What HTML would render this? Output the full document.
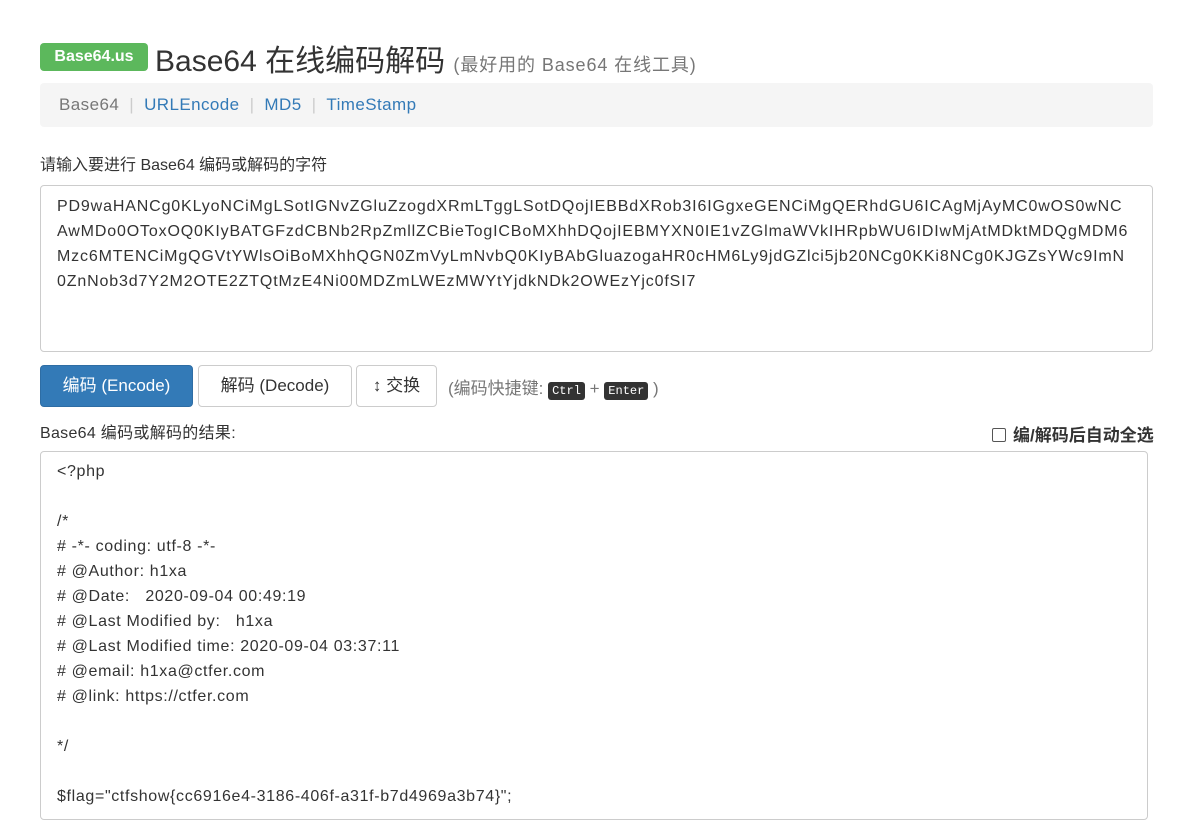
<!DOCTYPE html>
<html><head><meta charset="utf-8"><style>
body{margin:0;background:#fff;font-family:"Liberation Sans","Noto Sans CJK SC",sans-serif;color:#333;width:1185px;height:824px;overflow:hidden;position:relative}
.abs{position:absolute}
.badge{left:40px;top:43px;width:108px;height:28px;background:#5cb85c;color:#fff;font-weight:bold;font-size:16px;border-radius:4px;text-align:center;line-height:28px}
.h1{left:155px;top:36px;font-size:30px;color:#333;white-space:nowrap}
.h1 small{font-size:18px;color:#777;letter-spacing:0.05em}
.nav{left:40px;top:83px;width:1113px;height:44px;background:#f5f5f5;border-radius:4px;font-size:17px;line-height:44px;letter-spacing:0.025em}
.nav span{color:#ccc;margin:0 10px}
.nav a{color:#337ab7;text-decoration:none}
.ta{border:1px solid #ccc;border-radius:4px;box-sizing:border-box;font-size:16px;line-height:25px;padding:8px 16px;color:#333;word-break:break-all;letter-spacing:0.85px}
.btn{top:365px;height:42px;box-sizing:border-box;border:1px solid #ccc;border-radius:4px;font-size:17px;line-height:40px;text-align:center;background:#fff}
kbd{background:#333;color:#fff;font-family:"Liberation Mono",monospace;font-size:12px;padding:2px 4px;border-radius:3px}
</style></head><body>
<div class="abs badge">Base64.us</div>
<div class="abs h1">Base64 在线编码解码 <small>(最好用的 Base64 在线工具)</small></div>
<div class="abs nav"><span style="color:#777;margin:0 0 0 19px">Base64</span><span>|</span><a>URLEncode</a><span>|</span><a>MD5</a><span>|</span><a>TimeStamp</a></div>
<div class="abs" style="left:40px;top:151px;font-size:16px">请输入要进行 Base64 编码或解码的字符</div>
<div class="abs ta" style="left:40px;top:185px;width:1113px;height:167px;white-space:pre-line">PD9waHANCg0KLyoNCiMgLSotIGNvZGluZzogdXRmLTggLSotDQojIEBBdXRob3I6IGgxeGENCiMgQERhdGU6ICAgMjAyMC0wOS0wNC
AwMDo0OToxOQ0KIyBATGFzdCBNb2RpZmllZCBieTogICBoMXhhDQojIEBMYXN0IE1vZGlmaWVkIHRpbWU6IDIwMjAtMDktMDQgMDM6
Mzc6MTENCiMgQGVtYWlsOiBoMXhhQGN0ZmVyLmNvbQ0KIyBAbGluazogaHR0cHM6Ly9jdGZlci5jb20NCg0KKi8NCg0KJGZsYWc9ImN
0ZnNob3d7Y2M2OTE2ZTQtMzE4Ni00MDZmLWEzMWYtYjdkNDk2OWEzYjc0fSI7</div>
<div class="abs btn" style="left:40px;width:153px;background:#337ab7;border-color:#2e6da4;color:#fff">编码 (Encode)</div>
<div class="abs btn" style="left:198px;width:154px">解码 (Decode)</div>
<div class="abs btn" style="left:356px;width:81px">↕ 交换</div>
<div class="abs" style="left:448px;top:374px;font-size:17px;color:#777">(编码快捷键: <kbd>Ctrl</kbd> + <kbd>Enter</kbd> )</div>
<div class="abs" style="left:40px;top:419px;font-size:16px;letter-spacing:0.3px">Base64 编码或解码的结果:</div>
<div class="abs" style="left:992px;top:421px;font-size:17px;font-weight:bold"><span style="display:inline-block;width:12px;height:12px;border:1px solid #555;border-radius:2px;vertical-align:-1px;margin-right:7px"></span>编/解码后自动全选</div>
<div class="abs ta" style="left:40px;top:451px;width:1108px;height:369px;white-space:pre;padding-top:7px;letter-spacing:0.65px">&lt;?php

/*
# -*- coding: utf-8 -*-
# @Author: h1xa
# @Date:   2020-09-04 00:49:19
# @Last Modified by:   h1xa
# @Last Modified time: 2020-09-04 03:37:11
# @email: h1xa@ctfer.com
# @link: https://ctfer.com

*/

$flag="ctfshow{cc6916e4-3186-406f-a31f-b7d4969a3b74}";</div>
</body></html>
